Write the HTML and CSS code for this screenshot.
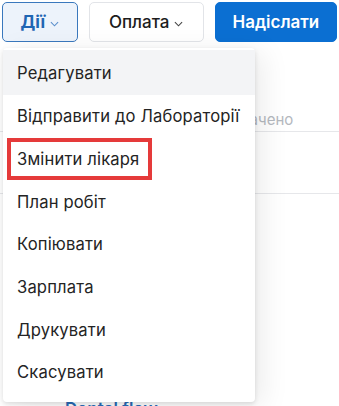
FILE: index.html
```html
<!DOCTYPE html>
<html lang="uk">
<head>
<meta charset="utf-8">
<link rel="stylesheet" href="styles.css">
</head>
<body>
<div class="page">
  <div class="toolbar">
    <button class="btn btn-actions">Дії <svg class="chev" viewBox="0 0 10 6" width="9" height="6"><path d="M1 1l4 4 4-4" fill="none" stroke="currentColor" stroke-width="1.2"/></svg></button>
    <button class="btn btn-pay">Оплата <svg class="chev" viewBox="0 0 10 6" width="9" height="6"><path d="M1 1l4 4 4-4" fill="none" stroke="currentColor" stroke-width="1.2"/></svg></button>
    <button class="btn btn-send">Надіслати</button>
  </div>
  <div class="content">
    <div class="row row-status"><span class="status">Не оплачено</span></div>
    <div class="row row-empty"></div>
    <div class="spacer"></div>
    <div class="brand">Dental flow</div>
  </div>
  <ul class="menu">
    <li class="item active">Редагувати</li>
    <li class="item">Відправити до Лабораторії</li>
    <li class="item"><span class="mark">Змінити лікаря</span></li>
    <li class="item">План робіт</li>
    <li class="item">Копіювати</li>
    <li class="item">Зарплата</li>
    <li class="item">Друкувати</li>
    <li class="item">Скасувати</li>
  </ul>
</div>
</body>
</html>
```
FILE: styles.css
```css
html, body {
  margin: 0;
  padding: 0;
  background: #fff;
}
body {
  font-family: "Inter", "Noto Sans", sans-serif;
  color: #222;
}
.page {
  position: relative;
  width: 339px;
  height: 406px;
  overflow: hidden;
}
.toolbar {
  display: flex;
  gap: 11px;
  padding: 2px 2px 0 2px;
}
.btn {
  height: 40px;
  border-radius: 5px;
  font-family: inherit;
  font-size: 16px;
  display: flex;
  align-items: center;
  justify-content: center;
  gap: 5px;
  cursor: pointer;
  padding: 0;
}
.btn-actions {
  width: 76px;
  background: #edf3fb;
  border: 1px solid #3a78bd;
  color: #1f65b3;
  font-weight: 700;
  font-size: 17px;
}
.btn-pay {
  width: 116px;
  background: #fff;
  border: 1px solid #e2e4e8;
  color: #1c1c1c;
  font-weight: 500;
  font-size: 17px;
}
.btn-actions .chev { color: #5b8fcc; margin-top: 3px; }
.btn-pay .chev { color: #444; margin-top: 3px; }
.btn-send {
  width: 123px;
  background: #0b6fd2;
  border: 1px solid #0b6fd2;
  color: #fff;
  font-weight: 600;
  font-size: 17px;
}
.content {
  display: flex;
  flex-direction: column;
  padding-top: 48px;
}
.row {
  box-sizing: border-box;
  border-bottom: 1px solid #e6e7ea;
}
.row-status {
  height: 42px;
  padding: 21px 0 0 199px;
  white-space: nowrap;
}
.status {
  display: block;
  color: #b4b8be;
  font-size: 15px;
  line-height: 18px;
}
.row-empty {
  height: 62px;
}
.spacer { height: 205px; }
.brand {
  padding-left: 65px;
  color: #2a6cb8;
  font-size: 17px;
  line-height: 20px;
  font-weight: 600;
}
.menu {
  position: absolute;
  left: 3px;
  top: 48px;
  width: 252px;
  margin: 0;
  padding: 2px 0 8px;
  list-style: none;
  background: #fff;
  border-radius: 4px;
  box-shadow: 0 2px 5px rgba(0,0,0,0.12), 8px 4px 28px rgba(0,0,0,0.08);
}
.item {
  height: 42.7px;
  display: flex;
  align-items: center;
  padding-left: 14px;
  font-size: 16.6px;
  letter-spacing: 0.15px;
  color: #242424;
  white-space: nowrap;
}
.item.active {
  background: #f3f4f6;
  height: 45px;
}
.mark {
  margin-left: -10px;
  padding: 7px 9px 7px 6px;
  border: 4px solid #e53a3a;
  line-height: 20px;
}
```
